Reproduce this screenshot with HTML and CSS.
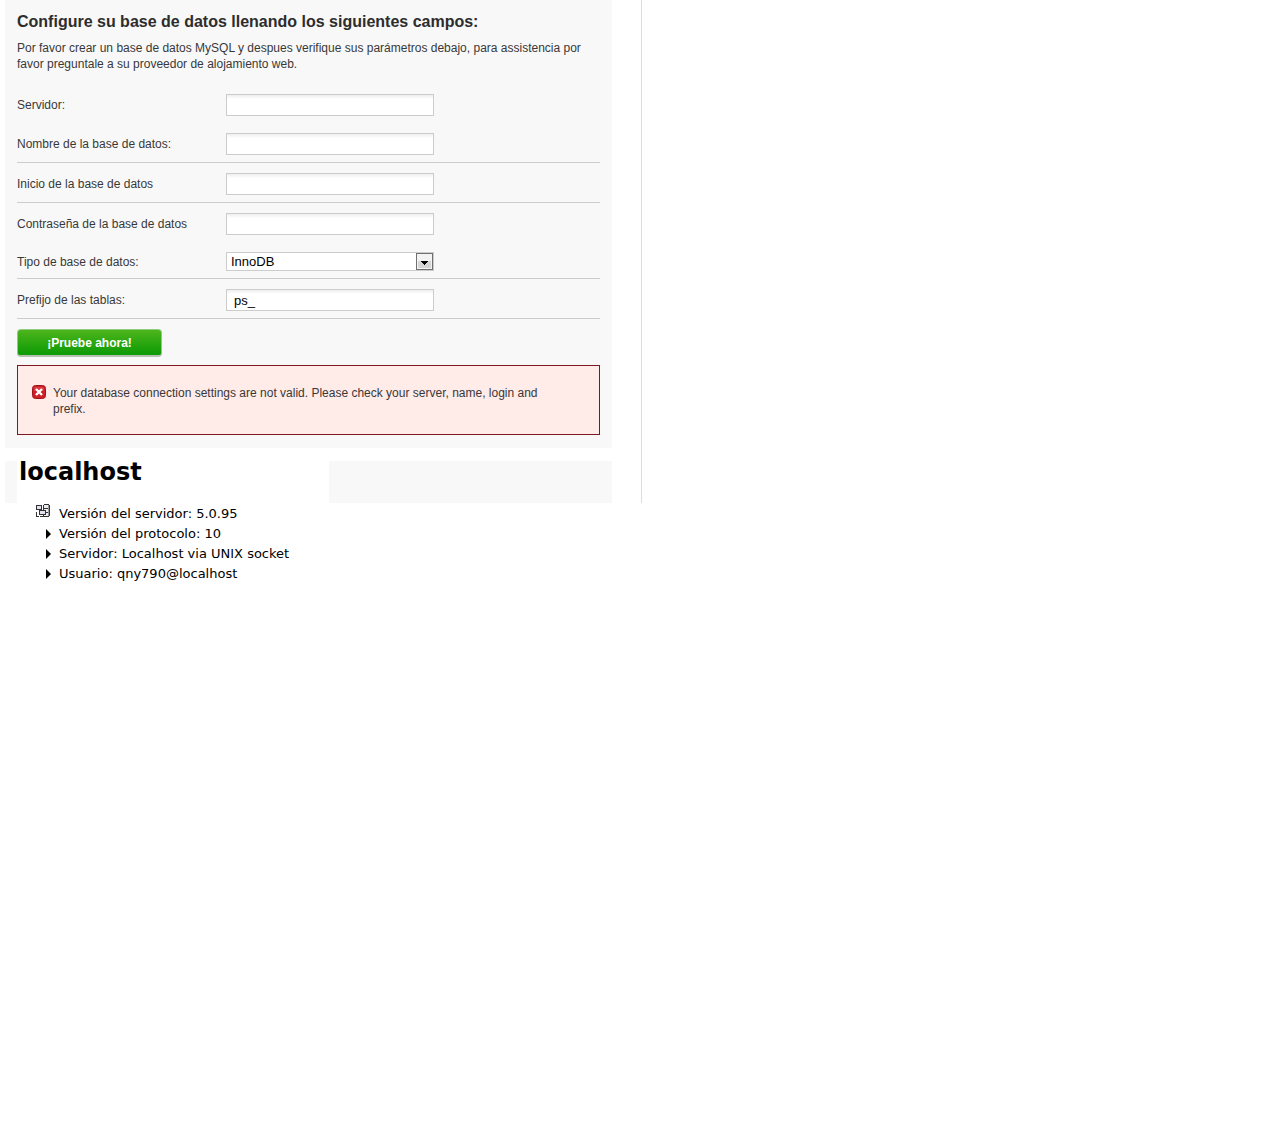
FILE: index.html
```html
<!DOCTYPE html>
<html lang="es">
<head>
  <meta charset="utf-8">
  <title>Configuración de la base de datos</title>
  <link rel="stylesheet" href="styles.css">
</head>
<body>
  <div class="column">
    <form class="panel">
      <h2>Configure su base de datos llenando los siguientes campos:</h2>
      <p class="intro">Por favor crear un base de datos MySQL y despues verifique sus parámetros debajo, para assistencia por favor preguntale a su proveedor de alojamiento web.</p>

      <div class="field">
        <label for="dbServer">Servidor:</label>
        <input type="text" id="dbServer">
      </div>
      <div class="field line">
        <label for="dbName">Nombre de la base de datos:</label>
        <input type="text" id="dbName">
      </div>
      <div class="field line">
        <label for="dbLogin">Inicio de la base de datos</label>
        <input type="text" id="dbLogin">
      </div>
      <div class="field">
        <label for="dbPassword">Contraseña de la base de datos</label>
        <input type="password" id="dbPassword">
      </div>
      <div class="field line">
        <label for="dbEngine">Tipo de base de datos:</label>
        <div class="select">
          <select id="dbEngine">
            <option>InnoDB</option>
            <option>MyISAM</option>
          </select>
          <svg class="arrow" width="17" height="17" viewBox="0 0 17 17" aria-hidden="true">
            <rect x="0.5" y="0.5" width="16" height="16" fill="#f3f3f3" stroke="#707070"/>
            <rect x="2" y="8" width="13" height="7" fill="#d6d6d6"/>
            <path d="M5 8h7v1h-1v1h-1v1h-1v1h-1v-1h-1v-1h-1v-1h-1z" fill="#000"/>
          </svg>
        </div>
      </div>
      <div class="field line">
        <label for="dbPrefix">Prefijo de las tablas:</label>
        <input type="text" id="dbPrefix" value="ps_">
      </div>

      <button type="button">¡Pruebe ahora!</button>

      <div class="error">
        <svg width="14" height="14" viewBox="0 0 14 14" aria-hidden="true">
          <rect x="0.5" y="0.5" width="13" height="13" rx="3" fill="#cf1f26" stroke="#a3131b"/>
          <path d="M2 2h10v4H2z" fill="#e0565a" opacity="0.5"/>
          <path d="M4 4l6 6M10 4l-6 6" stroke="#fff" stroke-width="2.4"/>
        </svg>
        <p>Your database connection settings are not valid. Please check your server, name, login and prefix.</p>
      </div>
    </form>

    <div class="strip">
      <h1>localhost</h1>
    </div>
  </div>

  <ul class="server-info">
    <li class="server">
      <svg width="15" height="14" viewBox="0 0 15 14" shape-rendering="crispEdges" aria-hidden="true">
        <!-- database cylinder -->
        <path d="M8 0h5v1h1v11h-1v1H8v-1H7V1h1z" fill="#333"/>
        <path d="M8 1h4v3H8zM8 5h4v3H8zM8 9h4v3H8z" fill="#eeeeee"/>
        <path d="M12 1h1v11h-1z" fill="#999"/>
        <!-- two screens -->
        <path d="M0 1h6v5H0z" fill="#333"/>
        <path d="M1 2h4v3H1z" fill="#dfe1f0"/>
        <path d="M3 6h7v5H3z" fill="#333"/>
        <path d="M4 7h5v3H4z" fill="#dfe1f0"/>
        <path d="M0 8h1v4h2v1H0zM4 12h5v1H4z" fill="#333"/>
      </svg>
      Versión del servidor: 5.0.95
    </li>
    <li>Versión del protocolo: 10</li>
    <li>Servidor: Localhost via UNIX socket</li>
    <li>Usuario: qny790@localhost</li>
  </ul>
</body>
</html>
```
FILE: styles.css
```css
:root {
  --panel-color: #f8f8f8;
  --text-color: #383838;
  --line-color: #cccccc;
}

* {
  box-sizing: border-box;
}

body {
  margin: 0;
  background-color: #ffffff;
  font-family: "Liberation Sans", Arial, sans-serif;
  font-size: 12px;
  line-height: 16px;
  color: var(--text-color);
}

.column {
  width: calc(50% - 1px);
  padding: 0 29px 0 5px;
  border-right: 1px solid #dddddd;
}

.panel {
  padding: 12px 12px 13px;
  background-color: var(--panel-color);
}

h2 {
  margin: 0 0 8px;
  font-size: 16px;
  line-height: 20px;
  color: #2d2d2d;
}

.intro {
  margin: 0 0 12px;
}

.field {
  display: flex;
  align-items: center;
  padding: 10px 0 7px;
}

.field.line {
  border-bottom: 1px solid var(--line-color);
}

.field label {
  width: 209px;
}

.field input,
.select {
  width: 208px;
}

.field input {
  height: 22px;
  padding: 0 7px;
  border: 1px solid var(--line-color);
  background: linear-gradient(#eeeeee, #ffffff 4px);
  font: 13px "Liberation Sans", Arial, sans-serif;
  color: #000000;
}

.select {
  position: relative;
}

.select select {
  display: block;
  width: 100%;
  height: 19px;
  padding: 0 4px;
  border: 1px solid var(--line-color);
  border-radius: 0;
  background-color: #ffffff;
  font: 13px "Liberation Sans", Arial, sans-serif;
  color: #000000;
  appearance: none;
}

.select .arrow {
  position: absolute;
  top: 1px;
  right: 1px;
  pointer-events: none;
}

button {
  display: block;
  width: 145px;
  height: 28px;
  margin: 10px 0 8px;
  padding: 0;
  border: 1px solid #8fcb83;
  border-bottom: 2px solid #b5bfb2;
  border-radius: 4px;
  background: linear-gradient(#4db51c, #0c9a05);
  font: bold 12px "Liberation Sans", Arial, sans-serif;
  color: #ffffff;
}

.error {
  display: flex;
  gap: 7px;
  padding: 19px 40px 17px 14px;
  border: 1px solid #7d1820;
  background-color: #ffebe8;
}

.error svg {
  flex: none;
}

.error p {
  margin: 0;
}

.strip {
  margin-top: 13px;
  padding-left: 12px;
  background-color: var(--panel-color);
}

h1 {
  width: 312px;
  height: 42px;
  margin: 0;
  padding-left: 2px;
  background-color: #ffffff;
  font: bold 24px/22px "DejaVu Sans", Verdana, sans-serif;
  color: #000000;
}

.server-info {
  margin: 0;
  padding: 1px 0 0 36px;
  list-style: none;
  font: 13px/20px "DejaVu Sans", Verdana, sans-serif;
  color: #000000;
}

.server-info li {
  display: flex;
  align-items: center;
  gap: 8px;
}

.server-info .server {
  align-items: flex-start;
}

.server-info li:not(.server)::before {
  content: "";
  margin-left: 10px;
  border: 5px solid transparent;
  border-left-color: #000000;
  border-right-width: 0;
}
```
